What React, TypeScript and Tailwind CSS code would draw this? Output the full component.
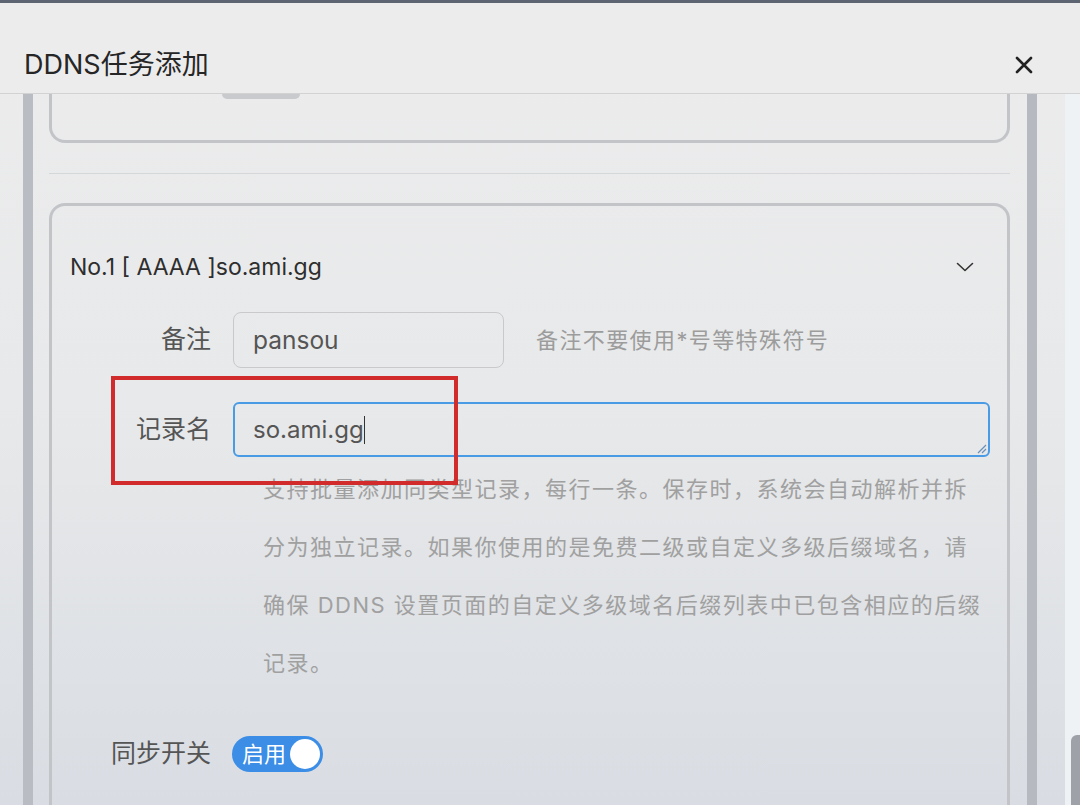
import React from "react";

const FONT = { fontFamily: 'Inter, "Noto Sans CJK SC", "Noto Sans", sans-serif' };

function CloseIcon() {
  return (
    <svg width="20" height="20" viewBox="0 0 20 20" fill="none">
      <path d="M3 3 L17 17 M17 3 L3 17" stroke="#222" strokeWidth="2.6" strokeLinecap="round" />
    </svg>
  );
}

function Chevron() {
  return (
    <svg width="18" height="10" viewBox="0 0 18 10" fill="none">
      <path d="M1.5 1.5 L9 8.5 L16.5 1.5" stroke="#333" strokeWidth="1.6" strokeLinecap="round" strokeLinejoin="round" />
    </svg>
  );
}

export default function App() {
  return (
    <div
      className="relative w-[1080px] h-[805px] overflow-hidden flex flex-col bg-linear-to-b from-[#ececed] via-[#e8e9ea] to-[#d9dde3]"
      style={FONT}
    >
      {/* top dark strip */}
      <div className="h-[3px] bg-[#5d6573] shrink-0" />

      {/* header */}
      <div className="h-[91px] shrink-0 flex items-center justify-between pl-[24px] pr-[46px] pt-[34px] border-b border-[#d2d2d3] bg-[#ececec]">
        <div className="text-[27px] leading-[34px] text-[#262626]">DDNS任务添加</div>
        <CloseIcon />
      </div>

      {/* body */}
      <div className="flex-1 flex min-h-0">
        <div className="w-[23px] shrink-0" />
        <div className="w-[10px] shrink-0 bg-[#b9bcc3]" />
        <div className="w-[16px] shrink-0" />

        {/* content column */}
        <div className="w-[961px] shrink-0 flex flex-col">
          {/* card 1 fragment */}
          <div className="h-[49px] border-x-[3px] border-b-[3px] border-[#c2c4c8] rounded-b-[16px]">
            <div className="ml-[170px] w-[78px] h-[5px] rounded-b-full bg-[#c8cacd]" />
          </div>

          <div className="h-[30px]" />
          <div className="h-px bg-[#d6d7d9]" />
          <div className="h-[29px]" />

          {/* card 2 */}
          <div className="flex-1 border-x-[3px] border-t-[3px] border-[#c2c4c8] rounded-t-[16px] flex flex-col">
            <div className="pt-[46px] pl-[18px] pr-[33px] flex items-center justify-between h-[76px]">
              <div className="text-[23px] leading-[30px] text-[#2e2e2e]">No.1 [ AAAA ]so.ami.gg</div>
              <Chevron />
            </div>

            {/* 备注 row */}
            <div className="mt-[30px] flex items-center">
              <div className="w-[159px] text-right text-[25px] text-[#555]">备注</div>
              <div className="ml-[22px] w-[271px] h-[56px] rounded-[8px] border-[1.5px] border-[#c9c9cb] flex items-center pl-[19px] text-[24.5px] text-[#555]">
                pansou
              </div>
              <div className="ml-[32px] text-[22px] tracking-[1.4px] text-[#9c9c9c]">备注不要使用*号等特殊符号</div>
            </div>

            {/* 记录名 row */}
            <div className="mt-[34px] flex items-start">
              <div className="w-[159px] h-[55px] flex items-center justify-end text-[25px] text-[#555]">记录名</div>
              <div className="ml-[22px] flex-1 pr-[17px] flex flex-col">
                <div className="relative h-[55px] rounded-[6px] border-2 border-[#4a9be6] flex items-center pl-[18px] text-[24px] text-[#555]">
                  <span>so.ami.gg</span>
                  <span className="w-[1.5px] h-[28px] bg-[#333]" />
                  <svg className="absolute right-[1px] bottom-[1px]" width="12" height="12" viewBox="0 0 12 12">
                    <path d="M11 3 L3 11 M11 7 L7 11" stroke="#6a8fb8" strokeWidth="1.2" />
                  </svg>
                </div>
                <div className="mt-[3px] ml-[30px] text-[22px] leading-[58px] tracking-[1.5px] text-[#a0a0a0]">
                  <div>支持批量添加同类型记录，每行一条。保存时，系统会自动解析并拆</div>
                  <div>分为独立记录。如果你使用的是免费二级或自定义多级后缀域名，请</div>
                  <div>确保 DDNS 设置页面的自定义多级域名后缀列表中已包含相应的后缀</div>
                  <div>记录。</div>
                </div>
              </div>
            </div>

            {/* 同步开关 row */}
            <div className="mt-[43px] flex items-center">
              <div className="w-[159px] text-right text-[25px] text-[#555]">同步开关</div>
              <div className="ml-[21px] w-[91px] h-[36px] rounded-full bg-[#3b8de6] flex items-center justify-between pl-[10px] pr-[3px]">
                <span className="text-[22px] text-white leading-none">启用</span>
                <span className="w-[30px] h-[30px] rounded-full bg-white" />
              </div>
            </div>
          </div>
        </div>

        <div className="w-[17px] shrink-0" />
        <div className="w-[10px] shrink-0 bg-[#b6b9c0]" />
        <div className="w-[28px] shrink-0" />
        <div className="flex-1 bg-[#eff2f5] flex flex-col justify-end items-end">
          <div className="w-[9px] h-[70px] rounded-tl-[6px] bg-[#9ea1a8]" />
        </div>
      </div>

      {/* red annotation box */}
      <div className="absolute left-[111px] top-[376px] w-[347px] h-[109px] border-[4px] border-[#d12b2b]" />
    </div>
  );
}
